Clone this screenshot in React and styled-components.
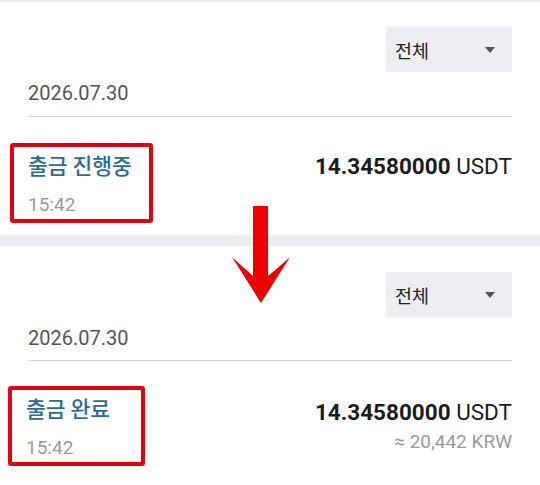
import React from "react";
import styled, { createGlobalStyle } from "styled-components";

const Global = createGlobalStyle`
  html, body { margin: 0; padding: 0; background: #ffffff; }
  body { font-family: Roboto, "Noto Sans CJK KR", sans-serif; -webkit-font-smoothing: antialiased; }
`;

const Page = styled.div`
  position: relative;
  width: 540px;
  height: 485px;
  overflow: hidden;
  background: #fff;
`;

const TopEdge = styled.div`
  height: 2px;
  background: #e9eaec;
`;

const Band = styled.div`
  height: 11px;
  background: #ebedf0;
`;

const Section = styled.section`
  padding: 0 28px;
  display: flex;
  flex-direction: column;
`;

const FilterRow = styled.div`
  display: flex;
  justify-content: flex-end;
  margin-top: ${(p) => p.$top}px;
`;

const Select = styled.div`
  width: 126px;
  height: 45px;
  box-sizing: border-box;
  background: #eceef1;
  display: flex;
  align-items: center;
  justify-content: space-between;
  padding: 0 17px 0 9px;
  font-family: "Noto Sans CJK KR", sans-serif;
  font-size: 18.5px;
  color: #222;
`;

const Caret = styled.span`
  width: 0;
  height: 0;
  border-left: 5.5px solid transparent;
  border-right: 5.5px solid transparent;
  border-top: 6px solid #555;
`;

const DateHeader = styled.div`
  margin-top: 9px;
  padding-bottom: ${(p) => p.$pb}px;
  border-bottom: 1px solid #d9d9dc;
  font-size: 20px;
  line-height: 24px;
  color: #555;
`;

const ItemRow = styled.div`
  display: flex;
  justify-content: space-between;
  align-items: flex-start;
  margin-top: ${(p) => p.$top}px;
  padding-bottom: ${(p) => p.$pb}px;
`;

const Highlight = styled.div`
  margin-left: ${(p) => p.$left}px;
  width: ${(p) => p.$w}px;
  box-sizing: border-box;
  border: 4px solid #e5000f;
  border-radius: 3px;
  padding: 5px 0 2px 14px;
  display: flex;
  flex-direction: column;
`;

const Status = styled.div`
  font-family: "Noto Sans CJK KR", sans-serif;
  font-size: 21.5px;
  font-weight: 500;
  line-height: 26px;
  color: #2a6d96;
`;

const Time = styled.div`
  margin-top: 15px;
  font-size: 19px;
  line-height: 24px;
  color: #9a9a9a;
`;

const AmountCol = styled.div`
  margin-top: ${(p) => p.$top}px;
  display: flex;
  flex-direction: column;
  align-items: flex-end;
`;

const Amount = styled.div`
  font-size: 22.5px;
  line-height: 26px;
  color: #1c1c1e;
  b { font-weight: 700; }
`;

const Fiat = styled.div`
  margin-top: 5px;
  font-size: 19px;
  line-height: 24px;
  color: #9a9a9a;
`;

const Arrow = styled.svg`
  position: absolute;
  left: 230px;
  top: 206px;
`;

function Block({ status, boxW, boxLeft, fiat, top, datePb, rowTop, rowPb, amtTop }) {
  return (
    <Section>
      <FilterRow $top={top}>
        <Select>
          <span>전체</span>
          <Caret />
        </Select>
      </FilterRow>
      <DateHeader $pb={datePb}>2026.07.30</DateHeader>
      <ItemRow $top={rowTop} $pb={rowPb}>
        <Highlight $w={boxW} $left={boxLeft}>
          <Status>{status}</Status>
          <Time>15:42</Time>
        </Highlight>
        <AmountCol $top={amtTop}>
          <Amount>
            <b>14.34580000</b> USDT
          </Amount>
          {fiat && <Fiat>≈ 20,442 KRW</Fiat>}
        </AmountCol>
      </ItemRow>
    </Section>
  );
}

export default function App() {
  return (
    <Page>
      <Global />
      <TopEdge />
      <Block status="출금 진행중" boxW={143} boxLeft={-18} top={25} datePb={11} rowTop={26} rowPb={12} amtTop={10} />
      <Band />
      <Block status="출금 완료" boxW={137} boxLeft={-20} top={26} datePb={10} rowTop={25} rowPb={12} amtTop={13} fiat />
      <Arrow width="62" height="98" viewBox="0 0 62 98">
        <path
          d="M23 0 L38 0 L38 70 Q48 62 60 51 L31 97 L2 51 Q14 62 23 70 Z"
          fill="#ee0000"
        />
      </Arrow>
    </Page>
  );
}
